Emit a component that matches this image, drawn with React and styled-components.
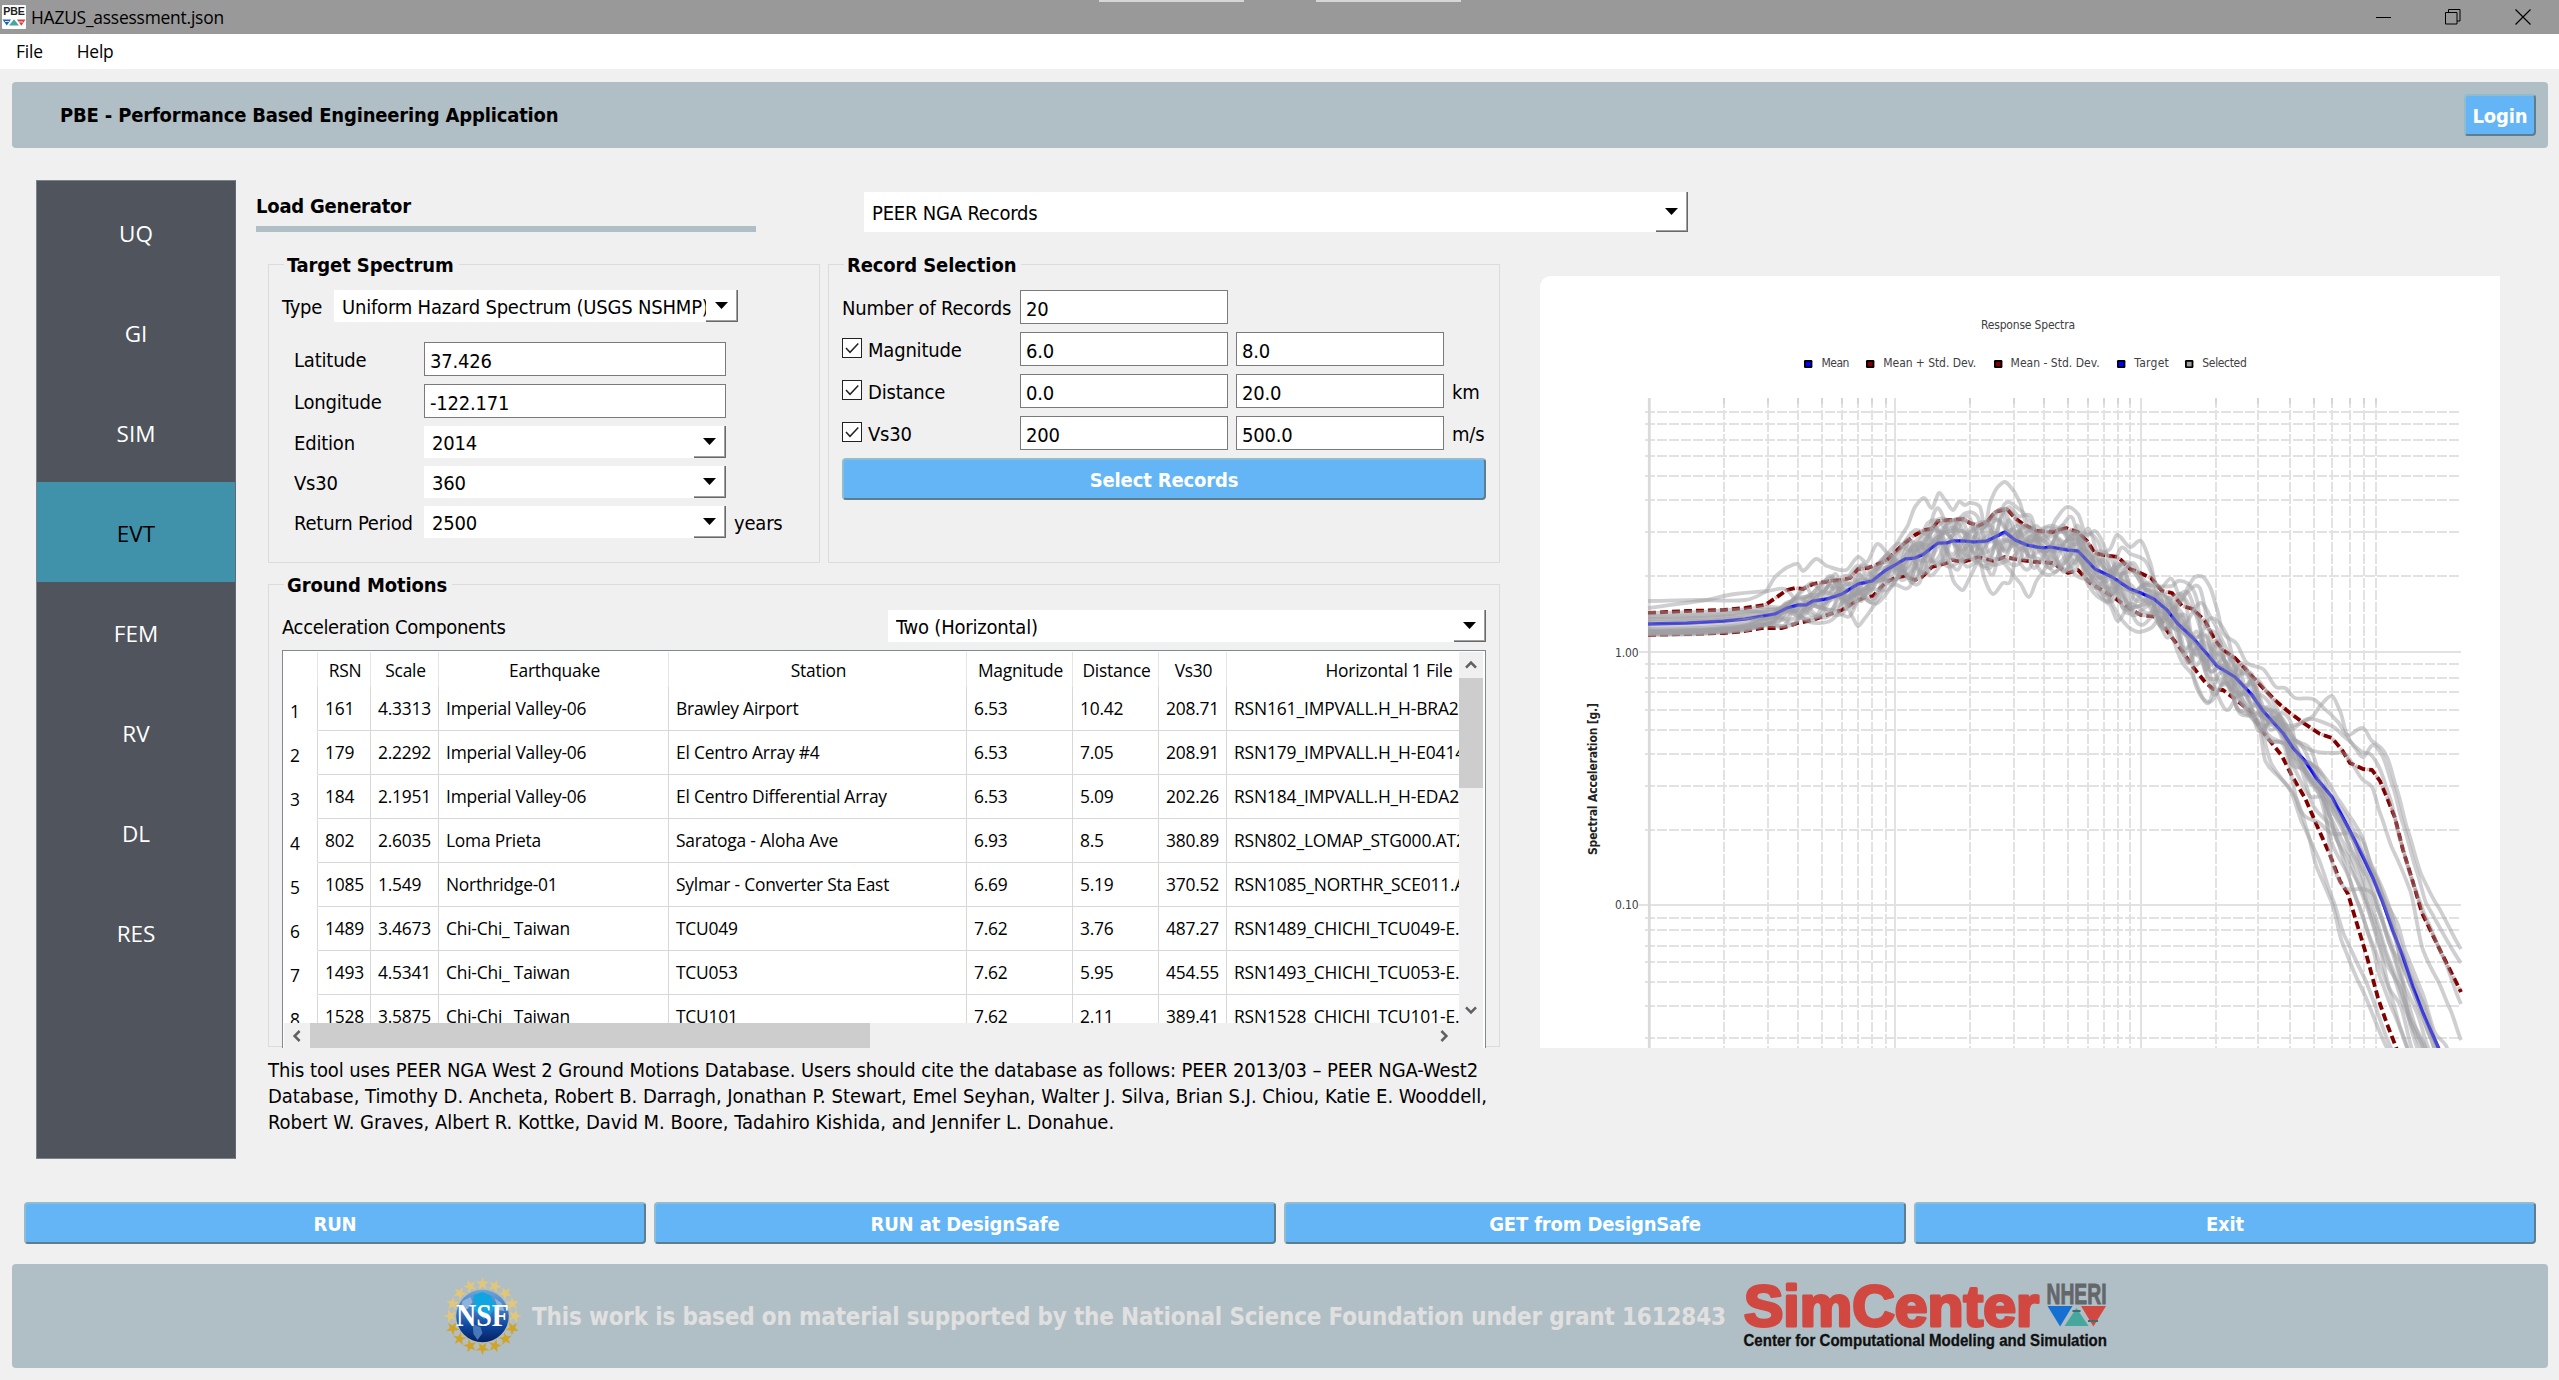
import React from 'react';
import styled, { createGlobalStyle, css } from 'styled-components';

const UI = `"DejaVu Sans Condensed", "DejaVu Sans", sans-serif`;
const SYS = `"Open Sans", "Noto Sans", sans-serif`;

const Global = createGlobalStyle`
  *, *::before, *::after { box-sizing: border-box; }
  html, body { margin: 0; overflow: hidden; background: #f0f0f0; }
  body { font: 20px/26px ${UI}; letter-spacing: -0.25px; color: #000; }
`;

const Window = styled.div`
  width: 2559px;
  height: 1380px;
  overflow: hidden;
  display: flex;
  flex-direction: column;
  background: #f0f0f0;
  white-space: nowrap;
`;

/* ---------- title bar and menu ---------- */
const TitleBar = styled.header`
  position: relative;
  flex: 0 0 34px;
  display: flex;
  align-items: center;
  padding: 0 28px 0 2px;
  background: #999;
  font: 17.4px/34px ${SYS};
  letter-spacing: -0.21px;
`;
const WindowTitle = styled.span`
  flex: 1;
  margin-left: 5px;
`;
const Controls = styled.div`
  display: flex;
  gap: 54px;
`;
const SnapHint = styled.i`
  position: absolute;
  top: 0;
  left: ${p => p.$left}px;
  width: 145px;
  height: 2px;
  background: #d6d6d6;
`;
const MenuBar = styled.nav`
  flex: 0 0 35px;
  display: flex;
  gap: 34px;
  padding-left: 16px;
  background: #fff;
  font: 17.4px/35px ${SYS};
  letter-spacing: -0.2px;
`;

/* ---------- banner ---------- */
const Banner = styled.div`
  flex: 0 0 66px;
  margin: 13px 11px 0 12px;
  padding: 0 12px 0 48px;
  display: flex;
  align-items: center;
  justify-content: space-between;
  background: #b0bec5;
  border-radius: 4px;
  font-weight: 700;
  letter-spacing: -0.17px;
`;
const Button = styled.button`
  width: ${p => p.$w || '100%'};
  height: 42px;
  padding: 1px 0 0;
  border: 2px solid;
  border-color: #90bbd0 #607d8b #607d8b #90bbd0;
  border-radius: 4px;
  background: #64b5f6;
  color: #fff;
  font: 700 20px/26px ${UI};
  letter-spacing: -0.15px;
`;

/* ---------- body ---------- */
const Body = styled.main`
  flex: 0 0 1022px;
  display: flex;
  padding: 32px 0 0 36px;
`;
const Sidebar = styled.ul`
  flex: 0 0 200px;
  height: 979px;
  margin: 0;
  padding: 1px 0 0;
  list-style: none;
  border: 1px solid #7b8290;
  border-right-color: #646872;
  background: #50545c;
`;
const SideItem = styled.li`
  height: 100px;
  text-align: center;
  font: 22.5px/104px ${SYS};
  letter-spacing: 0;
  color: #fff;
  ${p => p.$active && css`background: #3f92a9; color: #000;`}
`;
const Content = styled.section`
  padding-left: 20px;
`;
const TopRow = styled.div`
  display: flex;
  height: 84px;
`;
const Heading = styled.h2`
  width: 500px;
  height: 52px;
  margin: 0 108px 0 0;
  padding: 13px 0 0;
  border-bottom: 6px solid #b0bec5;
  font: 700 20px/26px ${UI};
  letter-spacing: -0.22px;
`;
const SourcePicker = styled.div`
  padding-top: 12px;
`;
const Workspace = styled.div`
  display: flex;
  align-items: flex-start;
  padding-left: 12px;
`;
const Left = styled.div`
  width: 1232px;
  margin-right: 40px;
`;
const Pair = styled.div`
  display: flex;
  gap: 8px;
  margin-bottom: 21px;
`;
const Group = styled.section`
  width: ${p => p.$w}px;
  height: ${p => p.$h}px;
  padding: 0 13px;
  border: 1px solid #dcdcdc;
`;
const GroupTitle = styled.h3`
  width: fit-content;
  height: 26px;
  margin: -13px 0 12px 2px;
  padding: 0 5px 0 3px;
  background: #f0f0f0;
  font: 700 20px/26px ${UI};
  letter-spacing: -0.12px;
`;
const TypeRow = styled.div`
  display: flex;
  align-items: center;
  justify-content: space-between;
  width: 456px;
  margin-bottom: 20px;
`;
const Label = styled.label`
  display: flex;
  align-items: center;
  gap: 6px;
  padding-top: 2px;
  line-height: 24px;
  letter-spacing: ${p => p.$ls ?? -0.2}px;
`;
const SpectrumGrid = styled.div`
  display: grid;
  grid-template-columns: 122px 302px auto;
  grid-template-rows: 34px 34px 32px 32px 32px;
  gap: 8px;
  align-items: center;
  padding-left: 12px;
`;
const RecordGrid = styled.div`
  display: grid;
  grid-template-columns: 170px 208px 208px auto;
  grid-auto-rows: 34px;
  gap: 8px;
  align-items: center;
  margin: 0 0 8px;
`;
const Input = styled.input`
  width: 100%;
  height: 34px;
  padding: 4px 6px 0 5px;
  border: 1px solid #7a7a7a;
  border-radius: 0;
  background: #fff;
  color: #000;
  font: 20px/26px ${UI};
  letter-spacing: -0.2px;
`;
const ComboBox = styled.div`
  width: ${p => p.$w || 302}px;
  height: ${p => p.$h || 32}px;
  display: flex;
  padding-left: 8px;
  background: #fff;
  letter-spacing: -0.2px;
`;
const ComboText = styled.span`
  flex: 1;
  min-width: 0;
  overflow: hidden;
  line-height: ${p => (p.$h || 32) + 2}px;
`;
const ComboArrow = styled.span`
  width: 32px;
  display: flex;
  align-items: center;
  justify-content: center;
  border: solid #696969;
  border-width: 0 1px 1px 0;
  box-shadow: inset -1px -1px 0 #a0a0a0;
`;
const Check = styled.span`
  width: 20px;
  height: 20px;
  margin-top: -4px;
  border: 1px solid #222;
  background: #fff;
  display: flex;
`;
const ComponentsRow = styled.div`
  display: flex;
  justify-content: space-between;
  margin-bottom: 8px;
`;

/* ---------- table ---------- */
const TableFrame = styled.div`
  width: 1204px;
  height: 398px;
  display: grid;
  grid-template-columns: 1175px 24px;
  grid-template-rows: 371px 25px;
  padding: 1px 2px 0 1px;
  border: 1px solid #828790;
  border-bottom: 0;
  background: #fff;
  font: 17.4px/20px ${SYS};
  letter-spacing: -0.22px;
`;
const TableView = styled.div`
  overflow: hidden;
`;
const columns = '34px 53px 68px 230px 298px 106px 86px 68px 323px';
const HeadRow = styled.div`
  display: grid;
  grid-template-columns: ${columns};
  height: 35px;
  width: 1266px;
`;
const HeadCell = styled.div`
  padding: 8px 0 0 2px;
  text-align: center;
  border-right: 1px solid #e5e5e5;
`;
const Row = styled(HeadRow)`
  height: 44px;
`;
const Cell = styled.div`
  padding: 11px 0 0 7px;
  border-right: 1px solid #d8d8d8;
  border-bottom: 1px solid #d8d8d8;
  overflow: hidden;
  ${p => p.$index && css`padding: 14px 0 0 6px; border-bottom-color: #fff;`}
  &:last-child { letter-spacing: -0.13px; }
`;
const VBar = styled.div`
  display: flex;
  flex-direction: column;
  align-items: center;
  background: #f0f0f0;
`;
const HBar = styled.div`
  display: flex;
  align-items: center;
  background: #f0f0f0;
  grid-column: 1 / 3;
`;
const BarButton = styled.span`
  flex: none;
  width: ${p => p.$w || 24}px;
  height: 26px;
  display: flex;
  align-items: center;
  justify-content: center;
`;
const VThumb = styled.span`
  width: 24px;
  height: 110px;
  margin-bottom: auto;
  background: #cdcdcd;
`;
const HThumb = styled.span`
  width: 560px;
  height: 25px;
  margin-right: auto;
  background: #cdcdcd;
`;
const Citation = styled.p`
  margin: 10px 0 0;
`;
const CitationLine = styled.span`
  display: block;
  letter-spacing: ${p => p.$ls}px;
`;
const ChartPanel = styled.div`
  width: 960px;
  height: 772px;
  margin-top: 12px;
  overflow: hidden;
  background: #fff;
  border-top-left-radius: 11px;
`;

/* ---------- bottom ---------- */
const Actions = styled.div`
  flex: none;
  display: grid;
  grid-template-columns: repeat(4, 1fr);
  gap: 8px;
  margin: 32px 23px 0 24px;
`;
const Footer = styled.footer`
  flex: 0 0 104px;
  margin: 20px 11px 0 12px;
  padding-left: 431px;
  display: flex;
  align-items: center;
  background: #b0bec5;
  border-radius: 4px;
`;
const Grant = styled.span`
  width: 1208px;
  margin: 2px 0 0 8px;
  color: #e0e0e0;
  font: 700 24px/32px ${UI};
  letter-spacing: -0.19px;
`;

/* ---------- spectra data ---------- */
const mean = [[1648,624],[1687,623],[1724,621],[1745,619],[1763,616],[1775,614],[1787,608],[1798,605],[1806,605],[1813,601],[1827,599],[1842,594],[1858,584],[1872,581],[1886,570],[1895,565],[1905,559],[1915,558],[1924,554],[1930,549],[1938,543],[1947,543],[1952,541],[1965,541],[1974,542],[1987,541],[2005,532],[2015,540],[2027,545],[2037,547],[2044,548],[2050,547],[2068,550],[2078,551],[2095,569],[2112,577],[2130,589],[2141,593],[2154,599],[2167,610],[2178,624],[2193,638],[2207,654],[2217,666],[2235,677],[2252,695],[2263,711],[2283,733],[2293,748],[2305,761],[2317,779],[2332,797],[2350,831],[2363,857],[2373,878],[2382,900],[2393,931],[2403,957],[2413,987],[2423,1013],[2438,1047],[2461,1105]];
const upper = [[1648,613],[1687,611],[1724,610],[1745,608],[1765,605],[1777,597],[1787,590],[1795,588],[1803,589],[1813,584],[1830,581],[1842,580],[1850,578],[1858,569],[1868,568],[1878,564],[1887,560],[1895,552],[1905,543],[1915,535],[1924,530],[1932,529],[1938,521],[1950,520],[1963,519],[1970,523],[1978,526],[1987,522],[1995,512],[2007,509],[2015,518],[2023,524],[2037,531],[2053,532],[2066,528],[2078,532],[2087,541],[2095,553],[2103,555],[2118,557],[2130,569],[2138,572],[2151,578],[2162,591],[2172,593],[2182,606],[2193,609],[2205,621],[2215,640],[2223,650],[2235,658],[2250,674],[2263,688],[2277,702],[2290,713],[2305,724],[2320,734],[2332,738],[2342,750],[2350,763],[2363,769],[2372,770],[2380,781],[2388,800],[2395,818],[2403,850],[2412,879],[2422,913],[2440,950],[2461,992]];
const lower = [[1648,635],[1687,634],[1724,633],[1745,631],[1763,628],[1782,628],[1798,623],[1813,620],[1827,615],[1842,610],[1853,603],[1863,598],[1873,596],[1886,582],[1895,578],[1905,576],[1915,580],[1922,577],[1932,567],[1947,563],[1952,560],[1963,562],[1978,557],[1993,561],[2005,557],[2020,560],[2037,562],[2053,563],[2068,573],[2078,570],[2090,583],[2112,596],[2130,609],[2141,615],[2158,617],[2170,635],[2183,652],[2193,667],[2205,682],[2213,689],[2223,690],[2235,699],[2250,711],[2263,732],[2282,756],[2292,776],[2305,798],[2318,828],[2330,855],[2340,881],[2348,894],[2357,924],[2367,957],[2378,998],[2387,1024],[2396,1047],[2461,1230]];

const at = (pts, x) => {
  for (let i = 1; i < pts.length; i++) {
    if (x <= pts[i][0]) {
      const [x0, y0] = pts[i - 1];
      const [x1, y1] = pts[i];
      return y0 + ((y1 - y0) * (x - x0)) / (x1 - x0);
    }
  }
  return pts[pts.length - 1][1];
};

/* start: level at the left edge; end: drift in the long-period range; pins: recorded excursions */
const records = [
  { start: 601, end: -0.12, pins: [[1648,601],[1700,600],[1745,600],[1765,592],[1776,576],[1788,567],[1798,564],[1803,571],[1816,559],[1827,566],[1846,570],[1858,557],[1867,562],[1877,544],[1887,553]] },
  { start: 608, end: -0.45, pins: [[1648,608],[1700,601],[1735,594],[1768,591],[1785,589]] },
  { start: 616, end: 0.02, pins: [[1895,547],[1907,527],[1915,507],[1924,498],[1932,508],[1939,493],[1945,500],[1953,510],[1959,502],[1965,505],[1970,503],[1980,507],[1985,527],[1990,503],[1997,488],[2005,482],[2013,490],[2020,503],[2025,520]] },
  { start: 619, end: -0.55, pins: [[1853,618],[1858,626],[1865,618],[1873,607]] },
  { start: 632, end: -0.66, pins: [[1953,580],[1958,587],[1963,590],[1970,577]] },
  { start: 633, end: -0.3, pins: [[1985,580],[1993,594],[2003,583],[2011,580]] },
  { start: 630, end: -0.78, pins: [[2020,583],[2029,597],[2037,580],[2046,567]] },
  { start: 631, end: -0.06, pins: [[2085,578],[2097,596],[2110,605],[2118,621],[2130,604]] },
  { start: 634, end: -0.38, pins: [[2110,600],[2122,620],[2131,629],[2139,632],[2151,628],[2160,618]] },
  { start: 635, end: 0, pins: [[2182,600],[2188,587],[2195,577],[2203,577],[2210,587],[2217,609],[2223,633],[2236,643],[2247,663],[2263,669],[2276,687],[2285,688],[2295,698],[2313,699],[2327,711],[2338,722],[2347,735],[2363,728],[2372,741],[2380,747],[2387,757],[2397,790],[2408,831],[2422,876],[2437,905],[2461,949]] },
  { start: 617, end: 0, pins: [[2290,726],[2303,722],[2313,716],[2320,706],[2332,696],[2340,711],[2347,735],[2355,748],[2363,757],[2373,745],[2382,755],[2393,787],[2403,824],[2417,872],[2427,905],[2461,963]] },
  { start: 629, end: 0, pins: [[2290,730],[2308,719],[2332,726],[2347,739],[2362,752],[2370,754],[2378,765],[2390,798],[2400,839],[2413,883],[2427,920],[2443,957],[2461,1004]] },
  { start: 622, end: 0, pins: [[2300,745],[2318,752],[2333,753],[2345,754],[2363,780],[2372,787],[2380,813],[2393,850],[2410,890],[2423,950],[2437,979],[2450,1009],[2461,1040]] },
  { start: 632, end: -0.9, pins: [[2258,720],[2265,760],[2275,773],[2287,785],[2297,800],[2307,830],[2317,868],[2332,903],[2342,942],[2360,985],[2387,1048],[2461,1220]] },
  { start: 634, end: -0.9, pins: [[2260,727],[2272,765],[2290,790],[2303,825],[2317,855],[2333,900],[2345,937],[2363,975],[2392,1050],[2461,1210]] },
  { start: 613, end: 0.06, pins: [[2172,586],[2178,581],[2187,583],[2197,600]] },
  { start: 620, end: -0.5, pins: [[2300,810],[2318,822],[2333,834],[2350,833],[2362,840],[2372,866],[2392,915]] },
  { start: 633, end: -0.2, pins: [[2110,549],[2117,535],[2130,547],[2141,541],[2150,562]] },
  { start: 626, end: 0.14, pins: [[2048,536],[2056,519],[2067,507],[2078,514],[2086,535],[2095,531],[2103,543]] },
  { start: 631, end: -0.25, pins: [[2332,862],[2345,888],[2363,889],[2375,897],[2390,945]] },
];

const random = seed => () => {
  seed = (seed * 1664525 + 1013904223) >>> 0;
  return seed / 4294967296;
};

const level = (x, d) => {
  const m = at(mean, x);
  return d > 0 ? m - d * Math.max(8, m - at(upper, x)) : m - d * Math.max(8, at(lower, x) - m);
};

const tracePoints = (rec, i) => {
  const rnd = random(i * 7919 + 17);
  const pts = [[1648, rec.start], [1700, rec.start - 1], [1730, rec.start - 3]];
  const drift = (rnd() - 0.5) * 1.0;
  const first = rec.pins[0][0];
  const last = rec.pins[rec.pins.length - 1][0];
  let d = (624 - rec.start) / 11;
  let x = 1748;
  while (x < 2462) {
    const late = Math.min(1, Math.max(0, (x - 2240) / 100));
    const early = Math.min(1, (x - 1740) / 110);
    const target = (drift + (rnd() - 0.5) * 3.4) * (1 - late) + (rec.end + (rnd() - 0.5) * 0.2) * late;
    d = d * (1 - 0.8 * early) + target * 0.8 * early;
    pts.push([x, level(x, d)]);
    x += 8 + rnd() * 9;
  }
  pts.push([2461, level(2461, d)]);
  return pts
    .filter(p => p[0] < first - 7 || p[0] > last + 7)
    .concat(rec.pins)
    .sort((a, b) => a[0] - b[0])
    .filter(p => p[0] <= 2461);
};

const smooth = pts => {
  let out = `M${pts[0][0]} ${pts[0][1].toFixed(1)}`;
  for (let i = 1; i < pts.length; i++) {
    const p0 = pts[Math.max(0, i - 2)], p1 = pts[i - 1], p2 = pts[i], p3 = pts[Math.min(pts.length - 1, i + 1)];
    const k = (p2[0] - p1[0]) / 3;
    const s1 = (p2[1] - p0[1]) / Math.max(1, p2[0] - p0[0]);
    const s2 = (p3[1] - p1[1]) / Math.max(1, p3[0] - p1[0]);
    out += `C${(p1[0] + k).toFixed(1)} ${(p1[1] + s1 * k * 0.8).toFixed(1)} ${(p2[0] - k).toFixed(1)} ${(p2[1] - s2 * k * 0.8).toFixed(1)} ${p2[0].toFixed(1)} ${p2[1].toFixed(1)}`;
  }
  return out;
};
const line = pts => 'M' + pts.map(p => p.join(' ')).join('L');

const minorX = [1724,1768,1798,1822,1842,1858,1872,1886,1970,2014,2044,2068,2088,2104,2118,2130,2216,2258,2290,2314,2332,2350,2364,2376];
const majorX = [1895, 2141];
const minorY = [412,424,440,456,476,500,532,576,664,678,692,710,730,754,786,830,918,930,946,962,982,1006,1038];
const majorY = [652, 905];
const legend = [
  [1804, 1821.4, 'Mean', '#0000ff', 28],
  [1866, 1883.3, 'Mean + Std. Dev.', '#800000', 93],
  [1994, 2010.6, 'Mean - Std. Dev.', '#800000', 89],
  [2117, 2134.3, 'Target', '#0000ff', 34.5],
  [2185, 2202.3, 'Selected', '#a0a0a4', 44.5],
];

const SpectraChart = () => (
  <svg width="960" height="772" viewBox="1540 276 960 772" fontFamily='"DejaVu Sans Condensed", sans-serif' fontSize="12" letterSpacing="0" fill="#404044">
    <text x="1981" y="328.5" textLength="94">Response Spectra</text>
    {legend.map(([mx, tx, name, color, w]) => (
      <g key={name}>
        <rect x={mx} y="360" width="8.4" height="8" rx="1.2" fill="#000" />
        <rect x={mx + 1.8} y="361.8" width="4.8" height="4.6" fill={color} />
        <text x={tx} y="367" textLength={w}>{name}</text>
      </g>
    ))}
    <g stroke="#e2e2e2" strokeWidth="2" fill="none">
      <path strokeDasharray="10 2" d={minorX.map(x => `M${x} 398V1048`).join('')} />
      <path strokeDasharray="10 2" d={minorY.map(y => `M1645 ${y}H2461`).join('')} />
      <path d={majorX.map(x => `M${x} 398V1048`).join('') + majorY.map(y => `M1639 ${y}H2461`).join('')} />
    </g>
    <path d={minorX.map(x => `M${x} 398V404`).join('')} stroke="#d6d6d6" strokeWidth="2" />
    <path d="M1649.3 398V1048" stroke="#dadada" strokeWidth="2.8" />
    <g fill="none" strokeLinejoin="round">
      <path d={line(mean)} stroke="#0000ff" strokeWidth="3.4" />
      <path d={line(upper)} stroke="#800000" strokeWidth="3.8" strokeDasharray="8 4" />
      <path d={line(lower)} stroke="#800000" strokeWidth="3.8" strokeDasharray="8 4" />
      <g stroke="#a0a0a4" strokeOpacity="0.5" strokeWidth="3.8">
        {records.map((r, i) => <path key={i} d={smooth(tracePoints(r, i))} />)}
      </g>
      <path d={line(mean.filter(p => p[0] > 1760))} stroke="#0000ff" strokeWidth="3.2" strokeOpacity="0.4" />
      <path d={line(upper.filter(p => p[0] > 1760))} stroke="#800000" strokeWidth="3.4" strokeOpacity="0.25" strokeDasharray="8 4" strokeDashoffset="0" />
    </g>
    <text x="1615" y="656.5" textLength="23.5">1.00</text>
    <text x="1615" y="909" textLength="23.5">0.10</text>
    <text transform="translate(1596.5 855) rotate(-90)" fontWeight="700" textLength="152" fill="#222">Spectral Acceleration [g.]</text>
  </svg>
);

/* ---------- drawings ---------- */
const AppIcon = () => (
  <svg width="24" height="24" viewBox="0 0 24 24">
    <rect width="24" height="24" rx="1" fill="#fff" />
    <text x="1.2" y="9.8" fontFamily='"Liberation Sans", sans-serif' fontWeight="700" fontSize="10.6" textLength="21.6" letterSpacing="0" fill="#222">PBE</text>
    <path d="M0.5 14.5h8.5l-4.2 6z" fill="#1d63b8" />
    <path d="M15 14.5h8.5l-4.2 6.2z" fill="#cf4140" />
    <path d="M7 20.6l5-6.4 5 6.4z" fill="#45a79d" />
    <path d="M3 16.5h4M16.5 17h4.5" stroke="#fff" strokeWidth="0.8" />
  </svg>
);
const Tri = () => (
  <svg width="15" height="10" viewBox="0 0 15 10"><path d="M1 1h13L7.5 8z" /></svg>
);
const Combo = ({ w, h, children }) => (
  <ComboBox $w={w} $h={h}>
    <ComboText $h={h}>{children}</ComboText>
    <ComboArrow><Tri /></ComboArrow>
  </ComboBox>
);
const CheckBox = () => (
  <Check>
    <svg width="18" height="18" viewBox="0 0 18 18" fill="none" stroke="#222" strokeWidth="1.5"><path d="M3 9l4 4.3L15.3 4.6" /></svg>
  </Check>
);
const Chevron = ({ r }) => (
  <svg width="14" height="14" viewBox="0 0 14 14" fill="none" stroke="#606060" strokeWidth="2.5">
    <path d="M2 9.6L7 4.6l5 5" transform={`rotate(${r} 7 7)`} />
  </svg>
);

const star = (cx, cy, r, rot) =>
  'M' + Array.from({ length: 10 }, (_, k) => {
    const a = rot + (k * Math.PI) / 5;
    const q = k % 2 ? r * 0.4 : r;
    return `${(cx + q * Math.sin(a)).toFixed(1)} ${(cy - q * Math.cos(a)).toFixed(1)}`;
  }).join('L') + 'Z';

const NsfLogo = () => (
  <svg width="81" height="82" viewBox="-39.5 -41 81 82">
    <defs>
      <linearGradient id="globe" x1="0" y1="0" x2="0" y2="1">
        <stop offset="0" stopColor="#6fa6d8" />
        <stop offset="0.4" stopColor="#3f78c0" />
        <stop offset="0.7" stopColor="#0c459b" />
        <stop offset="1" stopColor="#07205f" />
      </linearGradient>
    </defs>
    <circle r="29" fill="none" stroke="#c6bea4" strokeWidth="1.6" />
    {Array.from({ length: 16 }, (_, i) => {
      const a = (i * Math.PI) / 8;
      const cx = 32.3 * Math.sin(a), cy = -32.3 * Math.cos(a);
      return <path key={i} d={star(cx, cy, 7, a)} fill={cy < 8 ? '#e2c67a' : '#d0a426'} />;
    })}
    <circle r="26.3" fill="url(#globe)" />
    <path d="M-9-21l9-3 9 4 1 6 7 1 3 6-8-1-5 8-6 3-6-6-6-5 3-5z" fill="#0ea5e0" />
    <path d="M-20-15l8-4 2 5-5 7-6 1zM12-18l7 5 3 8-6-1z" fill="#8db4dd" />
    <path d="M-10 8l8 3 2 6-5 7-4-6z" fill="#4779ba" />
    <text x="0" y="10" textAnchor="middle" textLength="53" lengthAdjust="spacingAndGlyphs" fontFamily='"Liberation Serif", serif' fontWeight="700" fontSize="31" letterSpacing="0" fill="#fff">NSF</text>
  </svg>
);

const SimCenterLogo = () => (
  <svg width="370" height="82" viewBox="1740 1275 370 82" fontFamily='"Liberation Sans", sans-serif' fontWeight="700" letterSpacing="0">
    <text x="1744" y="1326" fontSize="57" textLength="295" lengthAdjust="spacingAndGlyphs" fill="#d14841" stroke="#d14841" strokeWidth="3" strokeLinejoin="round">SimCenter</text>
    <text x="2046.5" y="1304.3" fontSize="29" textLength="60" lengthAdjust="spacingAndGlyphs" fill="#63676a" stroke="#63676a" strokeWidth="0.9">NHERI</text>
    <text x="1743.5" y="1346" fontSize="15.8" textLength="363.5" lengthAdjust="spacingAndGlyphs" fill="#111" stroke="#111" strokeWidth="0.3">Center for Computational Modeling and Simulation</text>
    <path d="M2047.5 1306h25l-12.4 20.5z" fill="#1670d2" />
    <path d="M2081 1306h25l-12.6 20.5z" fill="#d14841" />
    <path d="M2064.5 1326l12-18 12 18z" fill="#46a79c" />
    <path d="M2072.5 1311h8M2088 1321h10" stroke="#3e6f70" strokeWidth="1.8" />
  </svg>
);

const head = ['', 'RSN', 'Scale', 'Earthquake', 'Station', 'Magnitude', 'Distance', 'Vs30', 'Horizontal 1 File'];
const rows = [
  ['161', '4.3313', 'Imperial Valley-06', 'Brawley Airport', '6.53', '10.42', '208.71', 'RSN161_IMPVALL.H_H-BRA225.AT2'],
  ['179', '2.2292', 'Imperial Valley-06', 'El Centro Array #4', '6.53', '7.05', '208.91', 'RSN179_IMPVALL.H_H-E04140.AT2'],
  ['184', '2.1951', 'Imperial Valley-06', 'El Centro Differential Array', '6.53', '5.09', '202.26', 'RSN184_IMPVALL.H_H-EDA270.AT2'],
  ['802', '2.6035', 'Loma Prieta', 'Saratoga - Aloha Ave', '6.93', '8.5', '380.89', 'RSN802_LOMAP_STG000.AT2'],
  ['1085', '1.549', 'Northridge-01', 'Sylmar - Converter Sta East', '6.69', '5.19', '370.52', 'RSN1085_NORTHR_SCE011.AT2'],
  ['1489', '3.4673', 'Chi-Chi_ Taiwan', 'TCU049', '7.62', '3.76', '487.27', 'RSN1489_CHICHI_TCU049-E.AT2'],
  ['1493', '4.5341', 'Chi-Chi_ Taiwan', 'TCU053', '7.62', '5.95', '454.55', 'RSN1493_CHICHI_TCU053-E.AT2'],
  ['1528', '3.5875', 'Chi-Chi_ Taiwan', 'TCU101', '7.62', '2.11', '389.41', 'RSN1528_CHICHI_TCU101-E.AT2'],
];
const ranges = [
  ['Magnitude', '6.0', '8.0', ''],
  ['Distance', '0.0', '20.0', 'km'],
  ['Vs30', '200', '500.0', 'm/s'],
];

export default function App() {
  return (
    <Window>
      <Global />
      <TitleBar>
        <AppIcon />
        <WindowTitle>HAZUS_assessment.json</WindowTitle>
        <SnapHint $left={1099} />
        <SnapHint $left={1316} />
        <Controls>
          <svg width="16" height="16" viewBox="0 0 16 16"><path d="M0.5 8h15" stroke="#000" strokeWidth="1" shapeRendering="crispEdges" /></svg>
          <svg width="16" height="16" viewBox="0 0 16 16" fill="none" stroke="#000"><path d="M0.5 3.5h11.5v11.5H0.5zM3.5 3.5v-3h11.5v11.5h-3" /></svg>
          <svg width="16" height="16" viewBox="0 0 16 16" fill="none" stroke="#000" strokeWidth="1.2"><path d="M0.5 0.5l15 15M15.5 0.5l-15 15" /></svg>
        </Controls>
      </TitleBar>
      <MenuBar><span>File</span><span>Help</span></MenuBar>
      <Banner>
        <span>PBE - Performance Based Engineering Application</span>
        <Button $w="72px">Login</Button>
      </Banner>
      <Body>
        <Sidebar>
          {['UQ', 'GI', 'SIM', 'EVT', 'FEM', 'RV', 'DL', 'RES'].map(s => (
            <SideItem key={s} $active={s === 'EVT'}>{s}</SideItem>
          ))}
        </Sidebar>
        <Content>
          <TopRow>
            <Heading>Load Generator</Heading>
            <SourcePicker><Combo w={824} h={40}>PEER NGA Records</Combo></SourcePicker>
          </TopRow>
          <Workspace>
            <Left>
              <Pair>
                <Group $w={552} $h={299}>
                  <GroupTitle>Target Spectrum</GroupTitle>
                  <TypeRow>
                    <Label>Type</Label>
                    <Combo w={404}>Uniform Hazard Spectrum (USGS NSHMP)</Combo>
                  </TypeRow>
                  <SpectrumGrid>
                    <Label>Latitude</Label><Input defaultValue="37.426" /><span />
                    <Label>Longitude</Label><Input defaultValue="-122.171" /><span />
                    <Label>Edition</Label><Combo>2014</Combo><span />
                    <Label>Vs30</Label><Combo>360</Combo><span />
                    <Label>Return Period</Label><Combo>2500</Combo><Label>years</Label>
                  </SpectrumGrid>
                </Group>
                <Group $w={672} $h={299}>
                  <GroupTitle>Record Selection</GroupTitle>
                  <RecordGrid>
                    <Label>Number of Records</Label><Input defaultValue="20" /><span /><span />
                    {ranges.map(([name, lo, hi, unit]) => (
                      <React.Fragment key={name}>
                        <Label><CheckBox />{name}</Label>
                        <Input defaultValue={lo} />
                        <Input defaultValue={hi} />
                        <Label>{unit}</Label>
                      </React.Fragment>
                    ))}
                  </RecordGrid>
                  <Button>Select Records</Button>
                </Group>
              </Pair>
              <Group $w={1232} $h={463}>
                <GroupTitle>Ground Motions</GroupTitle>
                <ComponentsRow>
                  <Label $ls={-0.34}>Acceleration Components</Label>
                  <Combo w={598}>Two (Horizontal)</Combo>
                </ComponentsRow>
                <TableFrame>
                  <TableView>
                    <HeadRow>{head.map((h, i) => <HeadCell key={i}>{h}</HeadCell>)}</HeadRow>
                    {rows.map((r, i) => (
                      <Row key={r[0]}>
                        <Cell $index>{i + 1}</Cell>
                        {r.map((c, j) => <Cell key={j}>{c}</Cell>)}
                      </Row>
                    ))}
                  </TableView>
                  <VBar>
                    <BarButton><Chevron r={0} /></BarButton>
                    <VThumb />
                    <BarButton><Chevron r={180} /></BarButton>
                  </VBar>
                  <HBar>
                    <BarButton $w={26}><Chevron r={-90} /></BarButton>
                    <HThumb />
                    <BarButton $w={78}><Chevron r={90} /></BarButton>
                  </HBar>
                </TableFrame>
              </Group>
              <Citation>
                <CitationLine $ls={-0.1}>This tool uses PEER NGA West 2 Ground Motions Database. Users should cite the database as follows: PEER 2013/03 – PEER NGA-West2</CitationLine>
                <CitationLine $ls={-0.025}>Database, Timothy D. Ancheta, Robert B. Darragh, Jonathan P. Stewart, Emel Seyhan, Walter J. Silva, Brian S.J. Chiou, Katie E. Wooddell,</CitationLine>
                <CitationLine $ls={-0.01}>Robert W. Graves, Albert R. Kottke, David M. Boore, Tadahiro Kishida, and Jennifer L. Donahue.</CitationLine>
              </Citation>
            </Left>
            <ChartPanel><SpectraChart /></ChartPanel>
          </Workspace>
        </Content>
      </Body>
      <Actions>
        <Button>RUN</Button>
        <Button>RUN at DesignSafe</Button>
        <Button>GET from DesignSafe</Button>
        <Button>Exit</Button>
      </Actions>
      <Footer>
        <NsfLogo />
        <Grant>This work is based on material supported by the National Science Foundation under grant 1612843</Grant>
        <SimCenterLogo />
      </Footer>
    </Window>
  );
}
